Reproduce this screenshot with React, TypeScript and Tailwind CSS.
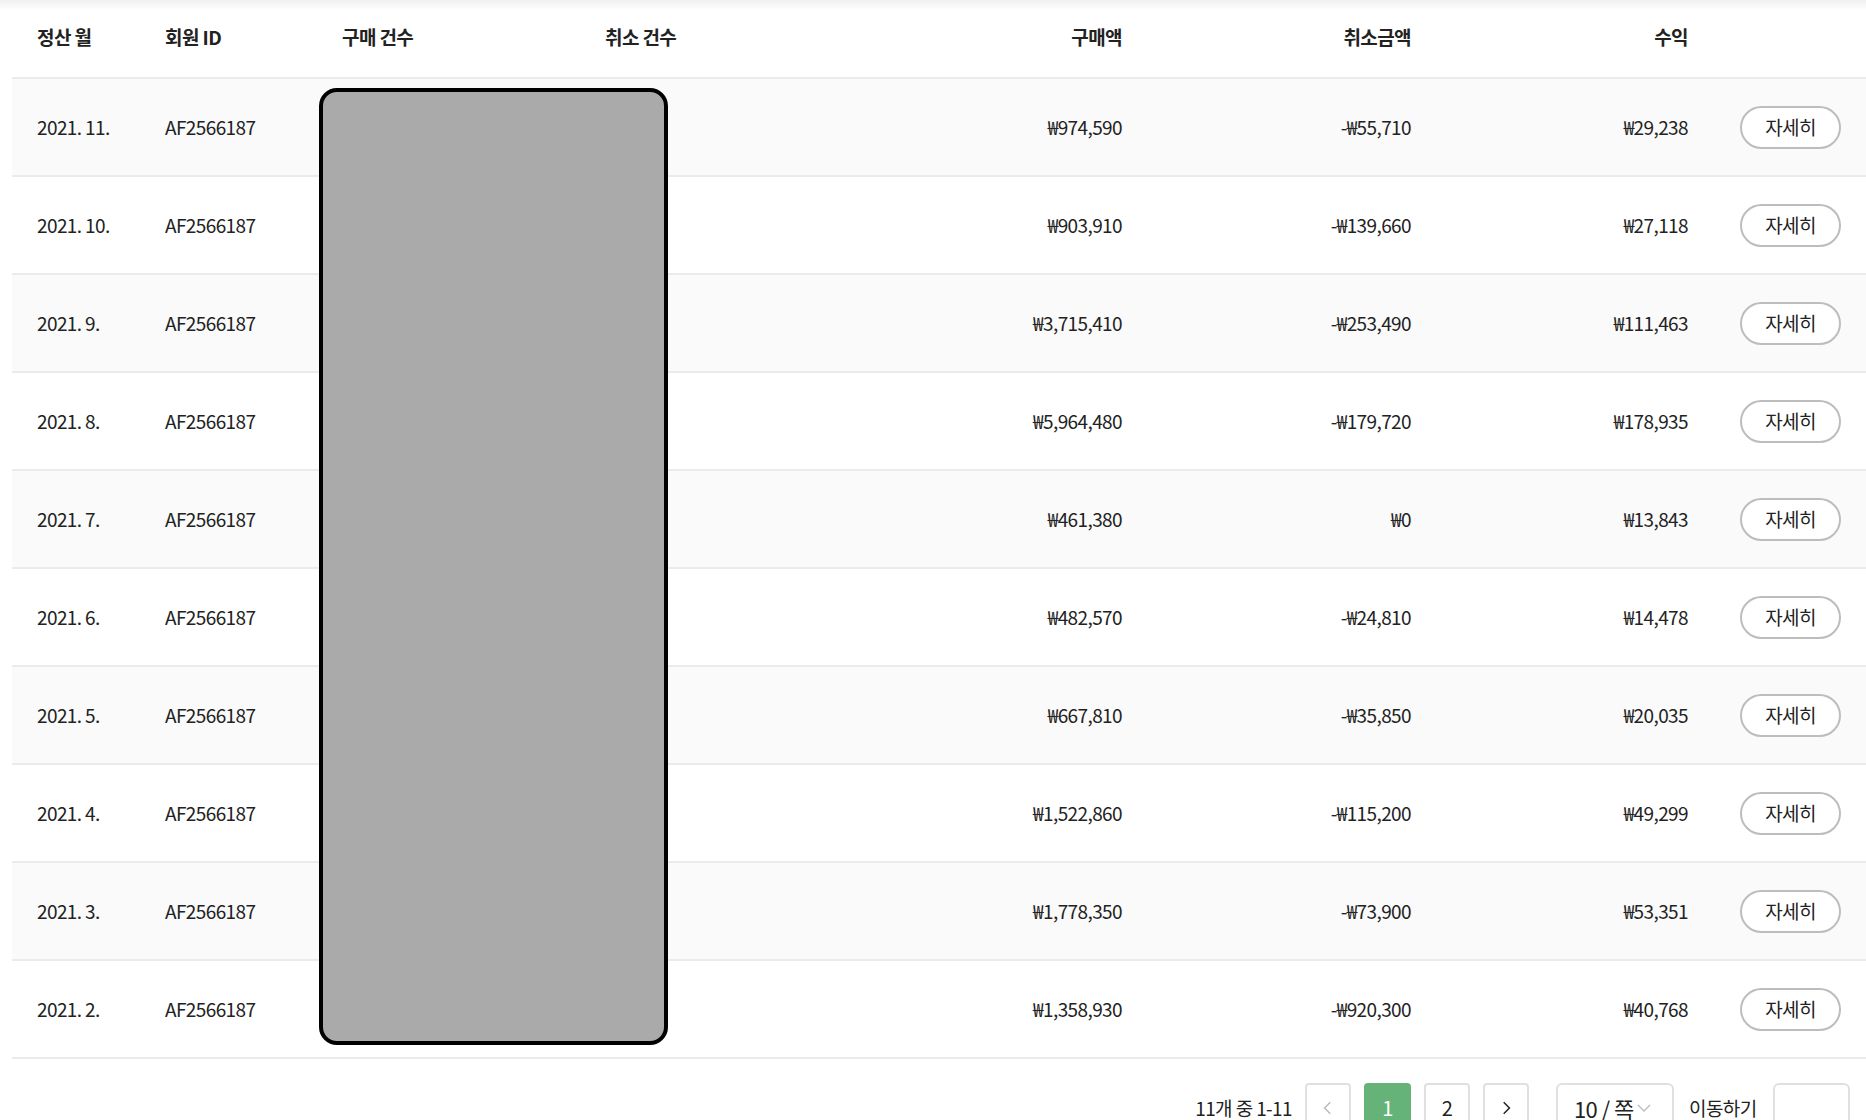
const rows = [
  ["2021. 11.", "₩974,590", "-₩55,710", "₩29,238"],
  ["2021. 10.", "₩903,910", "-₩139,660", "₩27,118"],
  ["2021. 9.", "₩3,715,410", "-₩253,490", "₩111,463"],
  ["2021. 8.", "₩5,964,480", "-₩179,720", "₩178,935"],
  ["2021. 7.", "₩461,380", "₩0", "₩13,843"],
  ["2021. 6.", "₩482,570", "-₩24,810", "₩14,478"],
  ["2021. 5.", "₩667,810", "-₩35,850", "₩20,035"],
  ["2021. 4.", "₩1,522,860", "-₩115,200", "₩49,299"],
  ["2021. 3.", "₩1,778,350", "-₩73,900", "₩53,351"],
  ["2021. 2.", "₩1,358,930", "-₩920,300", "₩40,768"],
];

const cols = "grid grid-cols-[153px_177px_263px_295px_222px_289px_277px_178px] items-center";

export default function App() {
  return (
    <div
      className="relative w-[1866px] h-[1120px] overflow-hidden bg-white text-[#222] text-[19px] tracking-[-0.6px]"
      style={{ fontFamily: '"Noto Sans CJK KR", "Noto Sans", sans-serif' }}
    >
      <div className="h-[10px] bg-gradient-to-b from-[#f0f0f0] to-white" />
      <div className="ml-[12px]">
        <div className={`${cols} h-[69px] pb-[12px] border-b-2 border-[#ebebeb] font-bold`}>
          <div className="pl-[25px]">정산 월</div>
          <div>회원 ID</div>
          <div>구매 건수</div>
          <div>취소 건수</div>
          <div className="text-right">구매액</div>
          <div className="text-right">취소금액</div>
          <div className="text-right">수익</div>
          <div />
        </div>
        {rows.map((r, i) => (
          <div
            key={r[0]}
            className={`${cols} h-[98px] border-b-2 border-[#ebebeb] ${i % 2 === 0 ? "bg-[#fafafa]" : "bg-white"}`}
          >
            <div className="pl-[25px]">{r[0]}</div>
            <div>AF2566187</div>
            <div />
            <div />
            <div className="text-right">{r[1]}</div>
            <div className="text-right">{r[2]}</div>
            <div className="text-right">{r[3]}</div>
            <div className="pl-[52px]">
              <button className="w-[101px] h-[43px] rounded-full border-2 border-[#bdbdbd] bg-white">자세히</button>
            </div>
          </div>
        ))}
      </div>

      <div className="flex items-center mt-[24px] ml-[1185px] gap-[13px] text-[19px]">
        <span className="w-[107px] text-right">11개 중 1-11</span>
        <div className="w-[46px] h-[50px] rounded-[4px] border-2 border-[#e0e0e0] flex items-center justify-center text-[#bbb]">
          <svg width="16" height="16" viewBox="0 0 14 14" fill="none" stroke="currentColor" strokeWidth="1.3"><path d="M9 2 4 7l5 5" /></svg>
        </div>
        <div className="w-[47px] h-[50px] rounded-[4px] bg-[#66b37a] text-white flex items-center justify-center text-[20px]">1</div>
        <div className="w-[46px] h-[50px] rounded-[4px] border-2 border-[#e0e0e0] flex items-center justify-center text-[20px]">2</div>
        <div className="w-[46px] h-[50px] rounded-[4px] border-2 border-[#e0e0e0] flex items-center justify-center">
          <svg width="16" height="16" viewBox="0 0 14 14" fill="none" stroke="currentColor" strokeWidth="1.3"><path d="m5 2 5 5-5 5" /></svg>
        </div>
        <div className="ml-[14px] w-[118px] h-[50px] rounded-[6px] border-2 border-[#e0e0e0] flex items-center pl-[16px] gap-[2px] text-[22px]">
          10 / 쪽
          <svg width="16" height="12" viewBox="0 0 16 12" fill="none" stroke="#bbb" strokeWidth="1.3"><path d="m2 3 6 6 6-6" /></svg>
        </div>
        <span className="ml-[2px]">이동하기</span>
        <div className="ml-[3px] w-[77px] h-[50px] rounded-[6px] border-2 border-[#e0e0e0]" />
      </div>

      <div className="absolute left-[319px] top-[88px] w-[349px] h-[957px] rounded-[18px] border-[4px] border-black bg-[#aaaaaa]" />
    </div>
  );
}
